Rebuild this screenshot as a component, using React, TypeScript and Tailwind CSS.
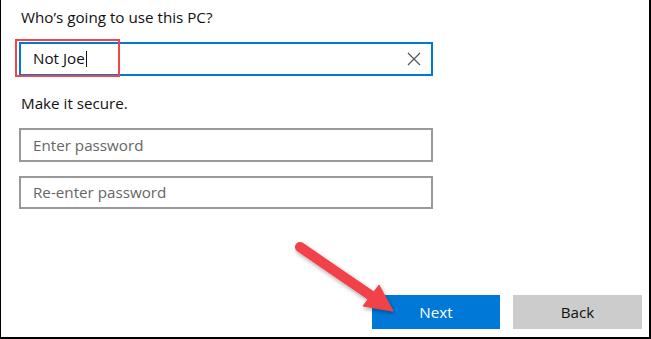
export default function App() {
  return (
    <div className="relative flex h-[339px] w-[651px] flex-col border-b-2 border-l border-r-2 border-black bg-white font-['Segoe_UI','Open_Sans',sans-serif] text-[15.2px] text-[#111]">
      <div className="flex flex-col pl-[18px] pt-[6px]">
        <p className="h-[22px] pl-[2px] leading-[22px]">Who’s going to use this PC?</p>

        {/* name field, focused */}
        <div className="mt-[14px] flex h-[34px] w-[414px] items-center border-2 border-[#0078d7] pl-[12px] pr-[10px]">
          <span className="leading-none">Not Joe</span>
          <span className="ml-[1px] h-[16px] w-px bg-[#111]" />
          <svg className="ml-auto h-[14px] w-[14px]" viewBox="0 0 14 14" stroke="#555" strokeWidth={1.2} fill="none">
            <path d="M1 1l12 12M13 1L1 13" />
          </svg>
        </div>

        <p className="mt-[16px] h-[22px] pl-[2px] leading-[22px]">Make it secure.</p>

        <div className="mt-[14px] flex h-[34px] w-[414px] items-center border-2 border-[#999] pl-[12px] text-[#666]">
          Enter password
        </div>
        <div className="mt-[14px] flex h-[33px] w-[414px] items-center border-2 border-[#999] pl-[12px] text-[#666]">
          Re-enter password
        </div>
      </div>

      <div className="mt-auto flex justify-end gap-[13px] pb-[8px] pr-[7px]">
        <button className="h-[34px] w-[128px] bg-[#0078d7] text-white">Next</button>
        <button className="h-[34px] w-[129px] bg-[#cccccc] text-[#111]">Back</button>
      </div>

      {/* annotation: red highlight box */}
      <div className="pointer-events-none absolute left-[14px] top-[39px] h-[38px] w-[105px] border-2 border-[#f0454b]" />

      {/* annotation: arrow */}
      <svg className="pointer-events-none absolute left-0 top-0 h-[339px] w-[651px]" viewBox="0 0 651 339">
        <defs>
          <filter id="sh" x="-20%" y="-20%" width="140%" height="140%">
            <feDropShadow dx="1" dy="2" stdDeviation="2" floodColor="#000" floodOpacity="0.35" />
          </filter>
        </defs>
        <g filter="url(#sh)" fill="#f1424a" stroke="#f1424a">
          <line x1="299" y1="247" x2="372" y2="297" strokeWidth="10" strokeLinecap="round" />
          <polygon points="378,285 362,306 392,311" strokeWidth="1" strokeLinejoin="round" />
        </g>
      </svg>
    </div>
  );
}
